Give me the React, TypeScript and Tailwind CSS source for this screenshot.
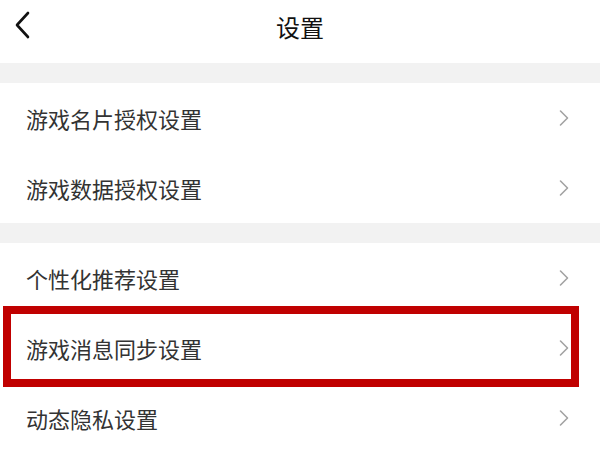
import React from "react";

const groups: string[][] = [
  ["游戏名片授权设置", "游戏数据授权设置"],
  ["个性化推荐设置", "游戏消息同步设置", "动态隐私设置"],
];

const highlighted = "游戏消息同步设置";

function ChevronRight() {
  return (
    <svg width="12" height="18" viewBox="0 0 12 18" fill="none">
      <path d="M2.5 2 L9.5 9 L2.5 16" stroke="#a3a3a3" strokeWidth="1.6" strokeLinecap="round" strokeLinejoin="round" />
    </svg>
  );
}

function Row({ label }: { label: string }) {
  const active = label === highlighted;
  return (
    <div className="relative flex h-[70px] items-center justify-between pl-[26px] pr-[30px]">
      <span className="text-[22px] text-[#333333]">{label}</span>
      <ChevronRight />
      {active ? (
        <div className="pointer-events-none absolute left-[3px] right-[21px] top-[-7px] bottom-[-4px] border-[8px] border-[#c00000]" />
      ) : null}
    </div>
  );
}

export default function App() {
  return (
    <div
      className="h-[451px] w-[600px] overflow-hidden bg-white"
      style={{ fontFamily: '"Noto Sans CJK SC", "Noto Sans", sans-serif' }}
    >
      <header className="relative flex h-[63px] items-start justify-center">
        <svg className="absolute left-[12px] top-[10px]" width="22" height="30" viewBox="0 0 22 30" fill="none">
          <path d="M16 3 L5 15 L16 27" stroke="#111111" strokeWidth="2.6" strokeLinecap="round" strokeLinejoin="round" />
        </svg>
        <h1 className="pt-[10px] text-[24px] leading-[34px] text-[#111111]">设置</h1>
      </header>
      {groups.map((rows, i) => (
        <section key={i}>
          <div className="h-[20px] bg-[#f2f2f2]" />
          {rows.map((label) => (
            <Row key={label} label={label} />
          ))}
        </section>
      ))}
    </div>
  );
}
